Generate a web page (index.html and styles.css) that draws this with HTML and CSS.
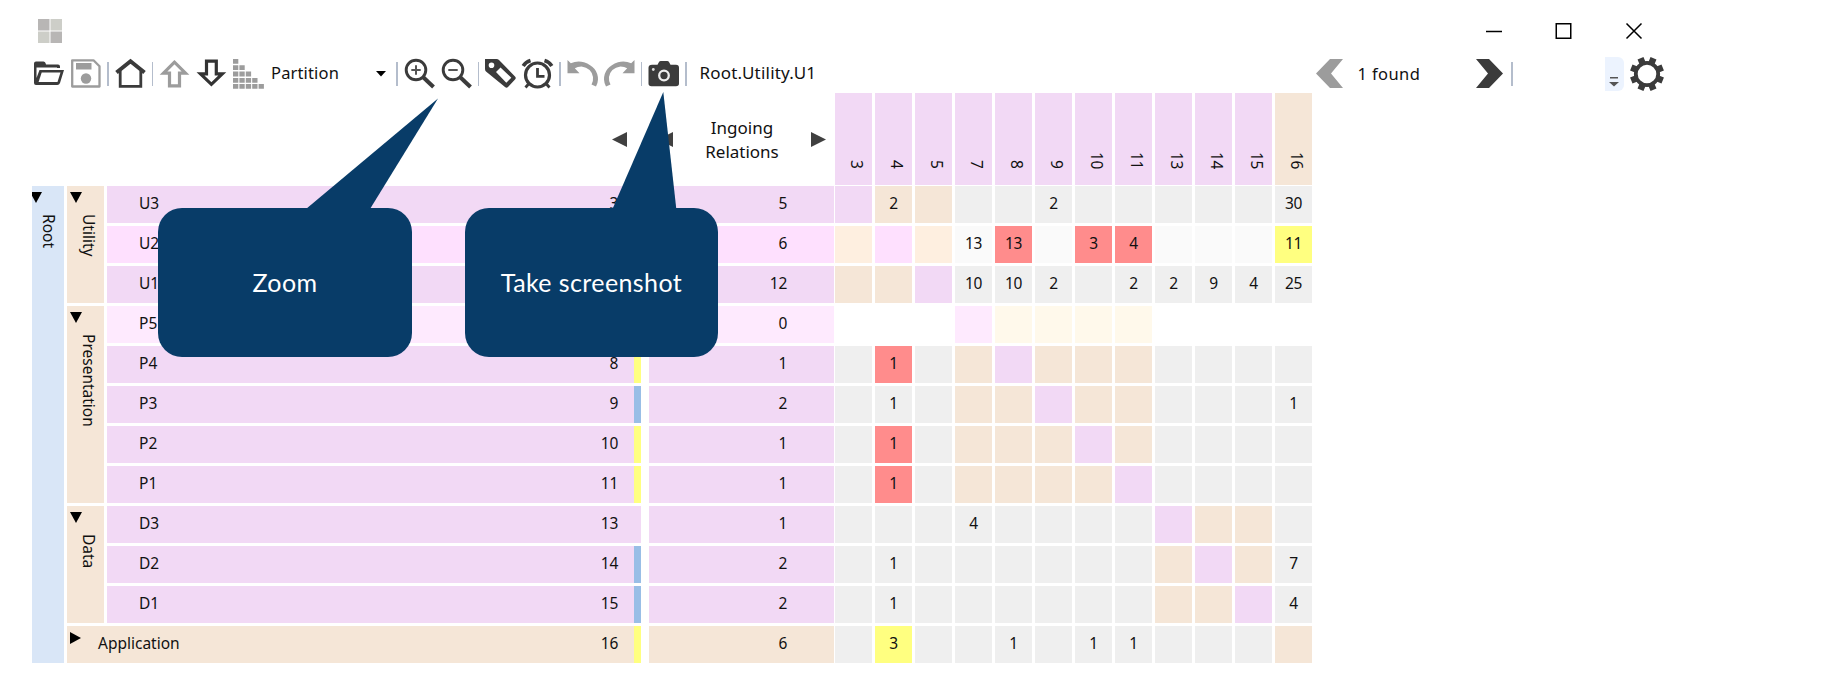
FILE: index.html
```html
<!DOCTYPE html>
<html lang="en">
<head>
<meta charset="utf-8">
<title>Dependency matrix</title>
<link rel="stylesheet" href="styles.css">
</head>
<body>
<header class="titlebar">
  <svg class="applogo" viewBox="0 0 24 24"><path fill="#b8b6b5" d="M0 0h11.5v11.5H0zM12.5 12.5H24V24H12.5z"/><path fill="#cdcec8" d="M12.5 0H24v11.5H12.5zM0 12.5h11.5V24H0z"/></svg>
  <div class="winbuttons">
    <svg viewBox="0 0 16 16"><path d="M0 8.5h16"/></svg>
    <svg viewBox="0 0 16 16"><path d="M.25.75h14.5v14.5H.25z"/></svg>
    <svg viewBox="0 0 16 16"><path d="M.5.5l15 15M15.5.5l-15 15"/></svg>
  </div>
</header>
<nav class="toolbar">
  <svg class="icon" viewBox="0 0 31 31"><path fill="#3b3b3b" d="M1 24V5.500Q1 3.500 3 3.500h7.500q1.500 0 2 1.500l.5 1.500h12q2 0 2 2V10h-3V9.500H3.500V20L6.500 12h24.500l-4 13q-.7 2-2.700 2H3Q1 27 1 25z"/><path fill="#fff" d="M8.700 14.500h18.800l-3 9.500H5.600z"/></svg>
  <svg class="icon" viewBox="0 0 31 31"><path fill="none" stroke="#9c9c9c" stroke-width="2.300" stroke-linejoin="round" d="M2.200 2.300h21.300l6 6v20.200H2.200z"/><path fill="#9c9c9c" d="M6 5h15.500v6.500H6z"/><circle cx="16" cy="20.500" r="5.200" fill="#9c9c9c"/></svg>
  <span class="sep"></span>
  <svg class="icon" viewBox="0 0 31 31"><path fill="none" stroke="#3b3b3b" stroke-width="2.800" d="M5.200 12.500v15.800h20.600V12.500"/><path fill="none" stroke="#3b3b3b" stroke-width="4" d="M1.500 14.500L15.500 3.200l14 11.300"/></svg>
  <span class="sep"></span>
  <svg class="icon" viewBox="0 0 31 31"><path fill="none" stroke="#9c9c9c" stroke-width="3.200" d="M15.500 4.200L4.500 15.200h6v12.700h10V15.200h6z"/></svg>
  <svg class="icon" viewBox="0 0 31 31"><path fill="none" stroke="#333" stroke-width="3.200" d="M10.500 3.200h9.800v12.600h6L15.400 26.300 4.500 15.800h6z"/></svg>
  <svg class="icon" viewBox="0 0 31 31"><path fill="none" stroke="#9c9c9c" stroke-width="4.800" stroke-dasharray="5.300 1.100" d="M0 3.400h5.300M0 9.700h11.700M0 16h18.100M0 22.300h24.500M0 28.400h31"/></svg>
  <div class="combo"><span>Partition</span><svg viewBox="0 0 10 6"><path d="M0 0h10L5 5.500z"/></svg></div>
  <span class="sep"></span>
  <svg class="icon" viewBox="0 0 31 31"><g fill="none" stroke="#3b3b3b"><circle cx="12" cy="12" r="9.800" stroke-width="2.900"/><path stroke-width="4" d="M19.500 19.500L29.500 29"/></g><path stroke="#555" stroke-width="2" d="M7.300 12h9.400M12 7.300v9.400"/></svg>
  <svg class="icon" viewBox="0 0 31 31"><g fill="none" stroke="#3b3b3b"><circle cx="12" cy="12" r="9.800" stroke-width="2.900"/><path stroke-width="4" d="M19.500 19.500L29.500 29"/></g><path stroke="#555" stroke-width="2" d="M7.300 12h9.400"/></svg>
  <span class="sep"></span>
  <svg class="icon" viewBox="0 0 31 31"><path fill="#3b3b3b" fill-rule="evenodd" d="M0 1h11.500Q13 1 14 2l16 16.500q1.500 1.500 0 3L23 29q-1.500 1.500-3 0L1 13.500Q0 12.500 0 11zM6.500 4.500a2.800 2.800 0 100 5.600 2.800 2.800 0 000-5.600zM15.500 9.500L11 14l10.300 10.700 5-5z"/></svg>
  <svg class="icon" viewBox="0 0 31 31"><g fill="none" stroke="#3b3b3b"><circle cx="15.500" cy="17" r="12" stroke-width="3.200"/><path stroke-width="2.800" d="M15.500 10v8.300h7M7 25.500l-3.500 4M24 25.500l3.500 4"/><path stroke-width="3.600" d="M1.200 8Q3.500 4 8.500 2.500M29.800 8Q27.500 4 22.500 2.500"/></g></svg>
  <span class="sep"></span>
  <svg class="icon" viewBox="0 0 31 31"><path fill="#9c9c9c" d="M.5 2l3.300 3.200Q10 2.500 17 4.200 31 9 31 21.500q-.2 4-2 7l-4.500-2q2-3.500 1.500-7.500Q24.500 10 14.500 8.500q-4 0-6.700 1.700l4.700 5H.5z"/></svg>
  <svg class="icon" viewBox="0 0 31 31"><path fill="#9c9c9c" transform="matrix(-1 0 0 1 31 0)" d="M.5 2l3.300 3.200Q10 2.500 17 4.200 31 9 31 21.500q-.2 4-2 7l-4.500-2q2-3.500 1.500-7.500Q24.500 10 14.500 8.500q-4 0-6.700 1.700l4.700 5H.5z"/></svg>
  <span class="sep"></span>
  <svg class="icon" viewBox="0 0 31 31"><path fill="#3b3b3b" d="M4 6.800h5.500L11 4q.5-1 1.800-1h6.400q1.300 0 1.800 1l1.500 2.800H28q3 0 3 3v15.700q0 2.700-3 2.700H3.500q-3 0-3-2.700V9.800q0-3 3.500-3z"/><circle cx="16" cy="17.500" r="4.800" fill="none" stroke="#eee" stroke-width="2.300"/><circle cx="5.300" cy="11.500" r="1.400" fill="#ddd"/></svg>
  <span class="sep"></span>
  <span class="path">Root.Utility.U1</span>
  <div class="search">
    <svg class="chev" viewBox="0 0 27 31"><path fill="#9c9c9c" d="M14 1h13L15 15.500 27 30H14L0 15.500z"/></svg>
    <span>1 found</span>
    <svg class="chev" viewBox="0 0 27 31"><path fill="#3b3b3b" d="M13 1H0l12 14.500L0 30h13l14-14.500z"/></svg>
    <span class="sep"></span>
  </div>
  <div class="overflow"><svg viewBox="0 0 10 10"><path fill="#555" d="M1 0h8v1.600H1zM0 5h10L5 9.500z"/></svg></div>
  <svg class="gear" viewBox="0 0 34 34"><circle cx="17" cy="17" r="11.200" fill="none" stroke="#3b3b3b" stroke-width="3.800"/><g fill="#3b3b3b"><path transform="rotate(22.500 17 17)" d="M13.800 0h6.400v6h-6.400zM13.800 28h6.400v6h-6.400zM0 13.800h6v6.400H0zM28 13.800h6v6.400h-6z"/><path transform="rotate(67.500 17 17)" d="M13.800 0h6.400v6h-6.400zM13.800 28h6.400v6h-6.400zM0 13.800h6v6.400H0zM28 13.800h6v6.400h-6z"/></g></svg>
</nav>

<section class="head">
  <div class="treehead"><svg class="arrow" viewBox="0 0 15 15"><path d="M15 0v15L0 7.500z"/></svg></div>
  <div class="metrichead">
    <svg class="arrow" viewBox="0 0 15 15"><path d="M15 0v15L0 7.500z"/></svg>
    <span>Ingoing<br>Relations</span>
    <svg class="arrow" viewBox="0 0 15 15"><path d="M0 0v15l15-7.500z"/></svg>
  </div>
  <div class="colhead"><b>3</b><b>4</b><b>5</b><b>7</b><b>8</b><b>9</b><b>10</b><b>11</b><b>13</b><b>14</b><b>15</b><b class="t">16</b></div>
</section>

<main class="body">
  <div class="root"><svg class="tri" viewBox="0 0 12 11"><path d="M0 0h12L6 11z"/></svg><span>Root</span></div>
  <div class="tree">
    <div class="group g3"><svg class="tri" viewBox="0 0 12 11"><path d="M0 0h12L6 11z"/></svg><span>Utility</span></div>
    <div class="item"><span>U3</span><em>3</em></div>
    <div class="item hi"><span>U2</span></div>
    <div class="item"><span>U1</span></div>
    <div class="group g5"><svg class="tri" viewBox="0 0 12 11"><path d="M0 0h12L6 11z"/></svg><span>Presentation</span></div>
    <div class="item sel"><span>P5</span></div>
    <div class="item yb"><span>P4</span><em>8</em></div>
    <div class="item bb"><span>P3</span><em>9</em></div>
    <div class="item yb"><span>P2</span><em>10</em></div>
    <div class="item yb"><span>P1</span><em>11</em></div>
    <div class="group g3"><svg class="tri" viewBox="0 0 12 11"><path d="M0 0h12L6 11z"/></svg><span>Data</span></div>
    <div class="item"><span>D3</span><em>13</em></div>
    <div class="item bb"><span>D2</span><em>14</em></div>
    <div class="item bb"><span>D1</span><em>15</em></div>
    <div class="item app yb"><svg class="tri" viewBox="0 0 11 12"><path d="M0 0v12l11-6z"/></svg><span>Application</span><em>16</em></div>
  </div>
  <div class="metric">
    <div>5</div><div class="hi">6</div><div>12</div><div class="sel">0</div><div>1</div><div>2</div><div>1</div><div>1</div><div>1</div><div>2</div><div>2</div><div class="t">6</div>
  </div>
  <div class="matrix">
    <div class="row"><i class="p"></i><i class="t">2</i><i class="t"></i><i></i><i></i><i>2</i><i></i><i></i><i></i><i></i><i></i><i>30</i></div>
    <div class="row hi"><i class="t"></i><i class="p"></i><i class="t"></i><i>13</i><i class="r">13</i><i></i><i class="r">3</i><i class="r">4</i><i></i><i></i><i></i><i class="y">11</i></div>
    <div class="row"><i class="t"></i><i class="t"></i><i class="p"></i><i>10</i><i>10</i><i>2</i><i></i><i>2</i><i>2</i><i>9</i><i>4</i><i>25</i></div>
    <div class="row sel"><i></i><i></i><i></i><i class="p"></i><i class="t"></i><i class="t"></i><i class="t"></i><i class="t"></i><i></i><i></i><i></i><i></i></div>
    <div class="row"><i></i><i class="r">1</i><i></i><i class="t"></i><i class="p"></i><i class="t"></i><i class="t"></i><i class="t"></i><i></i><i></i><i></i><i></i></div>
    <div class="row"><i></i><i>1</i><i></i><i class="t"></i><i class="t"></i><i class="p"></i><i class="t"></i><i class="t"></i><i></i><i></i><i></i><i>1</i></div>
    <div class="row"><i></i><i class="r">1</i><i></i><i class="t"></i><i class="t"></i><i class="t"></i><i class="p"></i><i class="t"></i><i></i><i></i><i></i><i></i></div>
    <div class="row"><i></i><i class="r">1</i><i></i><i class="t"></i><i class="t"></i><i class="t"></i><i class="t"></i><i class="p"></i><i></i><i></i><i></i><i></i></div>
    <div class="row"><i></i><i></i><i></i><i>4</i><i></i><i></i><i></i><i></i><i class="p"></i><i class="t"></i><i class="t"></i><i></i></div>
    <div class="row"><i></i><i>1</i><i></i><i></i><i></i><i></i><i></i><i></i><i class="t"></i><i class="p"></i><i class="t"></i><i>7</i></div>
    <div class="row"><i></i><i>1</i><i></i><i></i><i></i><i></i><i></i><i></i><i class="t"></i><i class="t"></i><i class="p"></i><i>4</i></div>
    <div class="row"><i></i><i class="y">3</i><i></i><i></i><i>1</i><i></i><i>1</i><i>1</i><i></i><i></i><i></i><i class="t"></i></div>
  </div>
</main>

<aside class="callout zoomtip"><svg viewBox="0 0 254 112"><path d="M148 112L280 1.500 212 112z"/></svg><span>Zoom</span></aside>
<aside class="callout shottip"><svg viewBox="0 0 254 119"><path d="M147.500 119L198.300 2 211.300 119z"/></svg><span>Take screenshot</span></aside>
</body>
</html>
```

FILE: styles.css
```css
* { box-sizing: border-box; }
body {
  margin: 0;
  width: 1831px;
  height: 681px;
  overflow: hidden;
  position: relative;
  background: #fff;
  color: #111;
  font: 15.5px/20px "Noto Sans", "Open Sans", sans-serif;
}
svg { display: block; flex: none; overflow: visible; }
i, em, b { font-style: normal; font-weight: 400; letter-spacing: -.3px; }

.titlebar { display: flex; justify-content: space-between; height: 58px; padding: 19px 189px 0 38px; }
.applogo { width: 24px; height: 24px; }
.winbuttons { display: flex; gap: 54px; padding-top: 4px; }
.winbuttons svg { width: 16px; height: 16px; fill: none; stroke: #000; stroke-width: 1.5; }

.toolbar { display: flex; align-items: center; gap: 6px; height: 31px; padding-left: 33px; font-size: 16.5px; }
.icon { width: 31px; height: 31px; }
.sep { flex: none; width: 1.5px; height: 24px; background: #b4bdcc; }
.combo { display: flex; align-items: center; justify-content: space-between; flex: none; width: 120px; padding: 0 4px 0 1px; }
.combo svg { width: 10px; height: 6px; }
.combo span, .path { position: relative; top: -1px; }
.combo span { letter-spacing: .15px; }
.path { flex: none; width: 617px; padding-left: 7px; font-size: 17px; letter-spacing: .2px; }
.search { display: flex; align-items: center; flex: none; width: 197px; }
.search span:not(.sep) { width: 134px; padding-left: 15px; letter-spacing: .4px; }
.search .sep { margin-left: 8px; }
.chev { width: 27px; height: 31px; }
.overflow { display: flex; justify-content: center; align-items: flex-end; flex: none; width: 19px; height: 34px; margin-left: 86px; padding-bottom: 4px; border-radius: 0 6px 6px 0; background: #ecf3fe; }
.overflow svg { width: 10px; height: 10px; }
.gear { width: 34px; height: 34px; }

.head { display: flex; height: 97px; padding: 4px 0 1px 32px; }
.treehead { display: flex; justify-content: flex-end; align-items: center; width: 609px; padding-right: 14px; }
.metrichead { display: flex; justify-content: space-between; align-items: center; width: 185px; margin-left: 8px; padding: 0 8px 0 9px; text-align: center; font-size: 17px; line-height: 24px; }
.metrichead span { padding-top: 2px; }
.arrow { width: 15px; height: 15px; fill: #404040; }
.colhead { display: flex; gap: 3px; margin-left: 1px; }
.colhead b { width: 37px; height: 92px; padding: 0 5px 16px 0; display: flex; justify-content: flex-end; writing-mode: vertical-rl; background: #f2d9f5; line-height: 20px; }
.colhead .t { background: #f5e6d7; }

.body { display: flex; padding-left: 32px; }
.root { width: 32px; height: 477px; margin-right: 3px; overflow: hidden; background: #d9e6f7; }
.root span, .group span { display: block; margin-top: 11px; writing-mode: vertical-rl; line-height: 20px; }
.tri { width: 12px; height: 11px; margin-top: 6px; fill: #000; }
.root .tri { margin-left: -2px; }
.root span { margin-left: 7px; }
.tree { display: grid; grid-template-columns: 37px 534px; grid-template-rows: repeat(12, 37px); gap: 3px; }
.group { background: #f5e6d7; padding-left: 3px; }
.group span { margin-left: 9px; }
.g3 { grid-row: span 3; }
.g5 { grid-row: span 5; }
.item { display: flex; justify-content: space-between; padding: 7px 16px 0 32px; background: #f2d9f5; border-right: 7px solid transparent; }
.yb { border-right-color: #ffff80; }
.bb { border-right-color: #99bee6; }
.app { grid-column: span 2; padding-left: 2px; background: #f5e6d7; }
.app .tri { width: 11px; height: 12px; margin: -1px 17px 0 1px; }
.app em { margin-left: auto; }
.metric { display: grid; grid-auto-rows: 37px; gap: 3px; width: 185px; margin-left: 8px; }
.metric div { padding: 7px 47px 0 0; text-align: right; background: #f2d9f5; letter-spacing: -.3px; }
.metric .t { background: #f5e6d7; }
.item.hi, .metric .hi { background-color: #fee0fe; }
.item.sel, .metric .sel { background-color: #feeafe; }

.matrix { display: grid; grid-auto-rows: 37px; gap: 3px; margin-left: 1px; }
.row { display: grid; grid-template-columns: repeat(12, 37px); gap: 3px; }
.row i { padding-top: 7px; text-align: center; background: #efefef; }
.row.hi i { background: #fafafa; }
.row.sel i { background: #fff; }
.row i.p { background: #f2d9f5; }
.row i.t { background: #f5e6d7; }
.row.hi i.p { background: #fee0fe; }
.row.hi i.t { background: #feefe0; }
.row.sel i.p { background: #feeafe; }
.row.sel i.t { background: #fff9eb; }
.row i.r, .row.hi i.r { background: #ff8c8c; }
.row i.y, .row.hi i.y { background: #ffff80; }

.callout {
  position: absolute;
  top: 208px;
  display: flex;
  align-items: center;
  justify-content: center;
  width: 254px;
  height: 149px;
  padding-bottom: 2px;
  border-radius: 24px;
  background: #083c68;
  color: #fff;
  font: 25px/30px Lato, sans-serif;
  letter-spacing: .4px;
}
.callout svg { position: absolute; left: 0; bottom: 148px; width: 254px; fill: #083c68; }
.zoomtip { left: 158px; }
.shottip { left: 465px; width: 253px; }
```
